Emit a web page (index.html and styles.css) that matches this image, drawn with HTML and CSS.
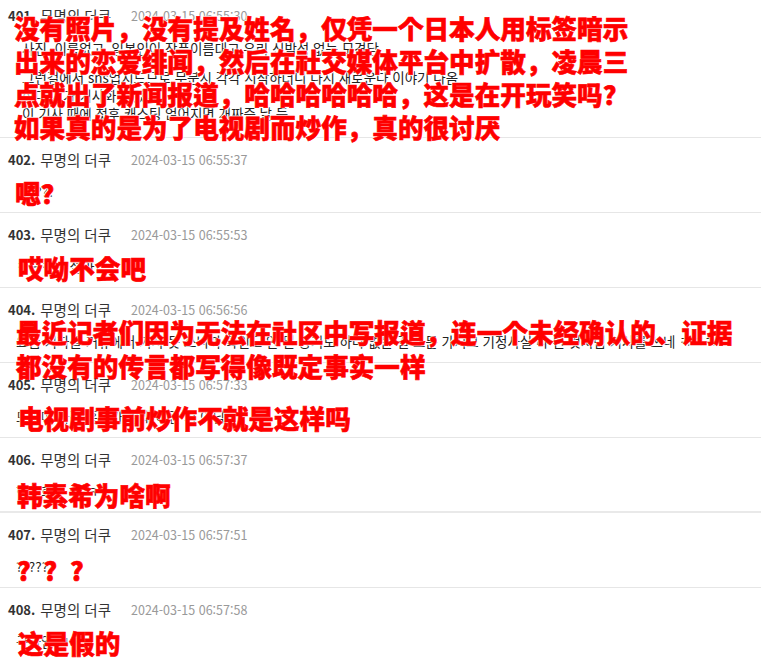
FILE: index.html
```html
<!DOCTYPE html>
<html lang="ko">
<head>
<meta charset="utf-8">
<title>댓글</title>
<link rel="stylesheet" href="styles.css">
</head>
<body>
<ul class="comments">
  <li class="comment comment--first">
    <div class="meta"><span class="num">401.</span><span class="nick">무명의 더쿠</span><span class="date">2024-03-15 06:55:30</span></div>
    <div class="body body--multi">
      <p class="para">사진, 이름없고, 일본인이 작품이름대고 우리 신박성 없는 모경담</p>
      <p class="para">그런걸에서 sns업지드므로 무분시 각각 시작하더니 다시 새로운다 이야기 나옴<br>한다 기가 기사화 되었나<br>이 기사 때에 첫후 캐스팅 얹어지면 개짜증 날 듯</p>
    </div>
    <p class="cap cap--first">没有照片，没有提及姓名，仅凭一个日本人用标签暗示<br>出来的恋爱绯闻，然后在社交媒体平台中扩散，凌晨三<br>点就出了新闻报道，哈哈哈哈哈哈，这是在开玩笑吗?<br>如果真的是为了电视剧而炒作，真的很讨厌</p>
  </li>
  <li class="comment">
    <div class="meta"><span class="num">402.</span><span class="nick">무명의 더쿠</span><span class="date">2024-03-15 06:55:37</span></div>
    <div class="body">??????</div>
    <p class="cap cap--s">嗯?</p>
  </li>
  <li class="comment">
    <div class="meta"><span class="num">403.</span><span class="nick">무명의 더쿠</span><span class="date">2024-03-15 06:55:53</span></div>
    <div class="body">ㅋㅋㅋㅋ 설마</div>
    <p class="cap">哎呦不会吧</p>
  </li>
  <li class="comment">
    <div class="meta"><span class="num">404.</span><span class="nick">무명의 더쿠</span><span class="date">2024-03-15 06:56:56</span></div>
    <div class="body body--line">요즘 기자들 커뮤에서 기사 못 쓰니까 확인도 안 된 증거도 하나 없는 걸 소문 가지고 기정사실 다 된 것처럼 기사를 쓰네 ㅋㅋㅋ</div>
    <p class="cap cap--two">最近记者们因为无法在社区中写报道，连一个未经确认的、证据<br>都没有的传言都写得像既定事实一样</p>
  </li>
  <li class="comment">
    <div class="meta"><span class="num">405.</span><span class="nick">무명의 더쿠</span><span class="date">2024-03-15 06:57:33</span></div>
    <div class="body">드라마 사전 홍보가 원래 이런 거 아님</div>
    <p class="cap">电视剧事前炒作不就是这样吗</p>
  </li>
  <li class="comment comment--thick">
    <div class="meta"><span class="num">406.</span><span class="nick">무명의 더쿠</span><span class="date">2024-03-15 06:57:37</span></div>
    <div class="body">한소희는 왜 ㅋㅋ</div>
    <p class="cap cap--low">韩素希为啥啊</p>
  </li>
  <li class="comment">
    <div class="meta"><span class="num">407.</span><span class="nick">무명의 더쿠</span><span class="date">2024-03-15 06:57:51</span></div>
    <div class="body">??????</div>
    <p class="cap cap--low">?&ensp;?&ensp;?</p>
  </li>
  <li class="comment">
    <div class="meta"><span class="num">408.</span><span class="nick">무명의 더쿠</span><span class="date">2024-03-15 06:57:58</span></div>
    <div class="body">구라임 ㅋㅋ</div>
    <p class="cap">这是假的</p>
  </li>
</ul>
</body>
</html>
```

FILE: styles.css
```css
html, body {
  margin: 0;
  padding: 0;
  background: #ffffff;
}

body {
  font-family: "Noto Sans CJK KR", "Liberation Sans", sans-serif;
  color: #333333;
  overflow: hidden;
}

.comments {
  list-style: none;
  margin: 0;
  padding: 0;
}

.comment {
  position: relative;
  padding: 12px 0 11px 8px;
  border-bottom: 1px solid #e6e6e6;
}

.comment--first {
  padding-top: 6px;
  padding-bottom: 15px;
}

.comment--thick {
  border-bottom: 2px solid #e9e9e9;
  padding-bottom: 10px;
}

.meta {
  display: flex;
  align-items: center;
  height: 20px;
  font-size: 13px;
  line-height: 20px;
  white-space: nowrap;
}

.num {
  font-weight: 700;
  color: #333333;
  margin-right: 5px;
}

.nick {
  color: #333333;
  font-size: 14.5px;
}

.date {
  color: #999999;
  font-size: 12.5px;
  margin-left: 20px;
}

.body {
  margin-top: 11px;
  padding-left: 8px;
  font-size: 13.5px;
  line-height: 20px;
  color: #222222;
  white-space: nowrap;
  overflow: hidden;
}

.body--multi {
  margin-top: 13px;
  padding-left: 14px;
  line-height: 18px;
}

.para {
  margin: 0 0 11px;
}

.para:last-child {
  margin-bottom: 0;
}

.cap {
  position: absolute;
  left: 18px;
  top: 40px;
  margin: 0;
  font-family: "Noto Sans CJK SC", sans-serif;
  font-weight: 900;
  font-size: 25.6px;
  line-height: 30px;
  color: #ff0000;
  white-space: nowrap;
  -webkit-text-stroke: 0.6px #ff0000;
  text-shadow: 0 0 1px #ffffff, 0 0 2px #ffffff, 1px 1px 1px #ffffff, -1px -1px 1px #ffffff;
}

.cap--first {
  left: 14px;
  top: 11px;
  line-height: 33px;
}

.cap--two {
  left: 16px;
  top: 27px;
  line-height: 34px;
}

.cap--s {
  left: 15px;
}

.cap--low {
  left: 17px;
  top: 42px;
}
```
